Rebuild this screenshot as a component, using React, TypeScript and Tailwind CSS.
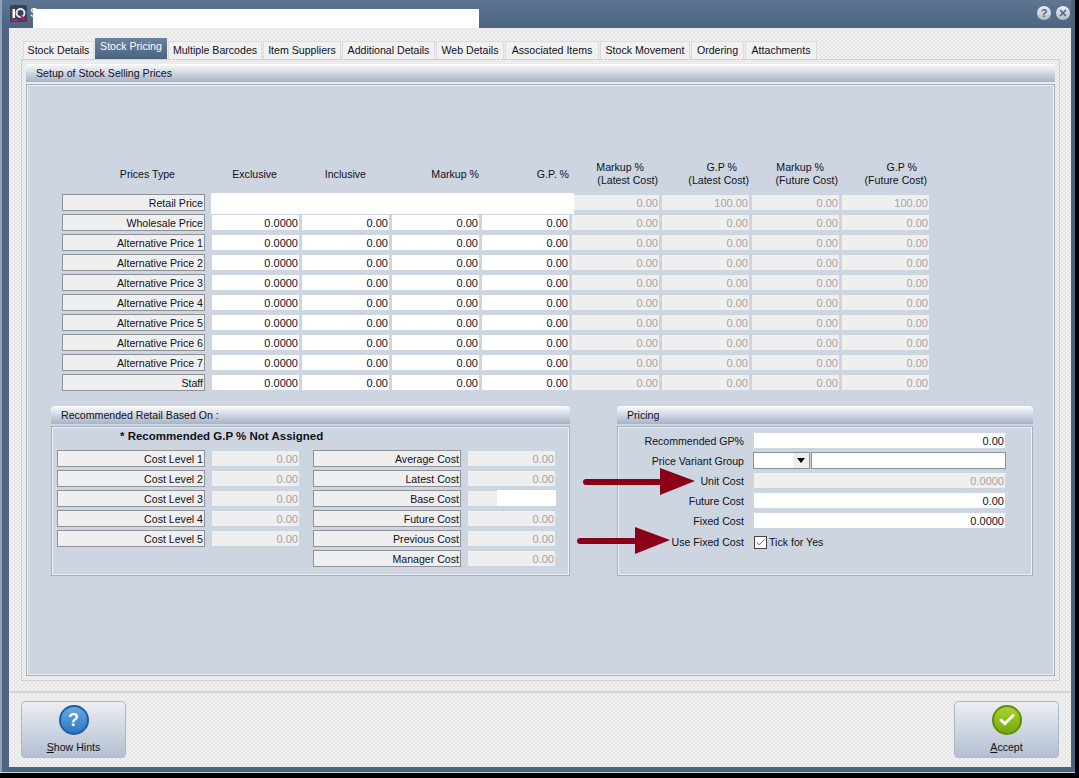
import type { ReactNode } from 'react';
import { Check, X } from 'lucide-react';

const tabs = [
  ['Stock Details', 'w-[71px]'],
  ['Stock Pricing', 'w-[72px]'],
  ['Multiple Barcodes', 'w-[94px]'],
  ['Item Suppliers', 'w-[78px]'],
  ['Additional Details', 'w-[93px]'],
  ['Web Details', 'w-[68px]'],
  ['Associated Items', 'w-[94px]'],
  ['Stock Movement', 'w-[90px]'],
  ['Ordering', 'w-[53px]'],
  ['Attachments', 'w-[72px]'],
];
const priceRows = ['Wholesale Price', 'Alternative Price 1', 'Alternative Price 2', 'Alternative Price 3', 'Alternative Price 4', 'Alternative Price 5', 'Alternative Price 6', 'Alternative Price 7', 'Staff'];
const costLevels = ['Cost Level 1', 'Cost Level 2', 'Cost Level 3', 'Cost Level 4', 'Cost Level 5'];
const costs = ['Average Cost', 'Latest Cost', 'Base Cost', 'Future Cost', 'Previous Cost', 'Manager Cost'];

function Label({ text, wide }: { text: string; wide?: boolean }) {
  return (
    <div className={(wide ? 'w-[148px]' : 'w-[143px]') + ' h-[17px] shrink-0 bg-[#efefef] border border-[#8e9296] text-right pr-[1px] leading-[16px]'}>
      {text}
    </div>
  );
}

function Field({ value, disabled, className = 'w-[87px]' }: { value: string; disabled?: boolean; className?: string }) {
  return (
    <div className={className + ' h-[15px] shrink-0 text-right text-[11px] pr-[1px] leading-[17px] ' + (disabled ? 'bg-[#efefef] text-[#a3a3a3]' : 'bg-white text-[#10101c]')}>
      {value}
    </div>
  );
}

function Panel({ title, className, boxClass, children }: { title: string; className: string; boxClass: string; children: ReactNode }) {
  return (
    <div className={className}>
      <div className="h-[18px] rounded-t-[4px] bg-gradient-to-b from-[#f6f7f9] to-[#a8b3c6] border-t border-white pl-[10px] leading-[17px]">{title}</div>
      <div className={'mt-[2px] border border-[#a3b0c1] shadow-[inset_0_0_0_1px_#eef1f5] bg-[#cdd6e0] ' + boxClass}>{children}</div>
    </div>
  );
}

function Arrow({ className, width, shaft }: { className: string; width: number; shaft: number }) {
  return (
    <svg className={'absolute ' + className} width={width} height={28} viewBox={`0 0 ${width} 28`}>
      <rect x="0" y="11" width={shaft + 2} height="6" rx="3" fill="#8a0018" />
      <path d={`M${shaft} 0 L${width} 13 L${shaft} 27 Z`} fill="#8a0018" />
    </svg>
  );
}

function ActionButton({ children, hot, rest }: { children: ReactNode; hot: string; rest: string }) {
  return (
    <div className="w-[105px] h-[57px] rounded-[4px] border border-[#a9b7cc] bg-gradient-to-b from-[#eceef2] to-[#b3bfd0] flex flex-col items-center pt-[3px]">
      {children}
      <div className="mt-[5px] leading-[14px] text-[#10101c]"><span className="underline">{hot}</span>{rest}</div>
    </div>
  );
}

export default function App() {
  return (
    <div className="relative w-[1079px] h-[778px] bg-black overflow-hidden font-['Liberation_Sans',sans-serif] text-[10.6px] text-[#10101c]">
      <div className="w-[1075px] h-[773px] bg-[#4d6480] border-b border-[#c9d2dd] flex flex-col pl-[9px] pr-[4px] pb-[5px] shadow-[inset_2px_0_0_#8fa2b8]">
        {/* Title bar */}
        <div className="h-[28px] shrink-0 flex items-start bg-gradient-to-b from-[#5f7693] to-[#4d6480] -ml-[7px] pl-[7px]">
          <svg className="mt-[5px] ml-[1px]" width="17" height="17" viewBox="0 0 17 17">
            <rect width="17" height="17" rx="2" fill="#39405a" />
            <rect x="2.5" y="4" width="2.5" height="9" fill="#fff" />
            <circle cx="10.5" cy="8" r="4" fill="none" stroke="#e8e8f0" strokeWidth="2" />
            <path d="M11 11 L15 15" stroke="#c2186b" strokeWidth="2.4" />
            <rect x="2" y="14" width="6" height="2" fill="#c2186b" />
          </svg>
          <span className="ml-[3px] mt-[4px] w-[3px] text-white text-[12px]">S</span>
          <div className="relative mt-[9px] w-[446px] h-[19px] bg-white" />
          <div className="ml-auto flex gap-[5px] mt-[6px] mr-[1px]">
            <div className="w-[14px] h-[14px] rounded-full bg-gradient-to-b from-[#f0f0f0] to-[#b5bcc6] text-[#4d6480] font-bold text-[11px] leading-[14px] text-center">?</div>
            <div className="w-[14px] h-[14px] rounded-full bg-gradient-to-b from-[#f0f0f0] to-[#b5bcc6] flex items-center justify-center">
              <X size={10} strokeWidth={4} className="text-[#4d6480]" />
            </div>
          </div>
        </div>

        {/* Body */}
        <div className="flex-1 flex flex-col bg-[#ececec] bg-[repeating-conic-gradient(#f1f1f1_0_25%,#e6e6e6_0_50%)] bg-[length:4px_4px]">
          <div className="flex ml-[14px] mt-[13px] gap-[1px] h-[18px] items-end">
            {tabs.map(([t, w]) => (
              <div
                key={t}
                className={w + ' text-center ' + (t === 'Stock Pricing'
                  ? 'h-[21px] bg-gradient-to-b from-[#6b829e] to-[#4d6480] text-white leading-[17px]'
                  : 'h-[18px] bg-[#f1f1f1] border-x border-t border-[#dcdcdc] leading-[16px]')}
              >
                {t}
              </div>
            ))}
          </div>
          <div className="ml-[12px] mr-[11px] h-[622px] border border-[#cfcfcf] p-[4px] flex flex-col">
            <Panel title="Setup of Stock Selling Prices" className="flex-1 flex flex-col" boxClass="flex-1 pl-[24px] pt-[76px]">
              <div className="ml-[11px]">
                <div className="flex items-center h-[26px] mb-[7px]">
                  <div className="w-[143px] text-right pr-[30px] pt-[2px]">Prices Type</div>
                  <div className="w-[7px]" />
                  <div className="flex items-center gap-[3px] text-right">
                    <div className="w-[87px] pr-[22px] pt-[2px]">Exclusive</div>
                    <div className="w-[87px] pr-[23px] pt-[2px]">Inclusive</div>
                    <div className="w-[87px] pt-[2px]">Markup %</div>
                    <div className="w-[87px] pt-[2px]">G.P. %</div>
                    <div className="w-[87px] leading-[13px]"><div className="pr-[15px]">Markup %</div><div className="pr-[1px]">(Latest Cost)</div></div>
                    <div className="w-[87px] leading-[13px]"><div className="pr-[12px]">G.P %</div><div>(Latest Cost)</div></div>
                    <div className="w-[87px] leading-[13px]"><div className="pr-[15px]">Markup %</div><div className="pr-[1px]">(Future Cost)</div></div>
                    <div className="w-[87px] leading-[13px]"><div className="pr-[12px]">G.P %</div><div className="pr-[2px]">(Future Cost)</div></div>
                  </div>
                </div>
                <div className="flex flex-col gap-[3px]">
                  <div className="relative flex items-center gap-[7px]">
                    <Label text="Retail Price" />
                    <div className="flex gap-[3px]">
                      <div className="w-[357px] shrink-0" />
                      <Field value="0.00" disabled />
                      <Field value="100.00" disabled />
                      <Field value="0.00" disabled />
                      <Field value="100.00" disabled />
                    </div>
                    <div className="absolute left-[149px] -top-[1px] w-[363px] h-[21px] bg-white" />
                  </div>
                  {priceRows.map((r) => (
                    <div key={r} className="flex items-center gap-[7px]">
                      <Label text={r} />
                      <div className="flex gap-[3px]">
                        <Field value="0.0000" />
                        <Field value="0.00" />
                        <Field value="0.00" />
                        <Field value="0.00" />
                        <Field value="0.00" disabled />
                        <Field value="0.00" disabled />
                        <Field value="0.00" disabled />
                        <Field value="0.00" disabled />
                      </div>
                    </div>
                  ))}
                </div>
              </div>

              <div className="flex gap-[47px] mt-[15px]">
                <Panel title="Recommended Retail Based On :" className="w-[519px]" boxClass="h-[150px] px-[5px]">
                  <div className="h-[23px] pl-[63px] pt-[2px] font-bold text-[11.5px] leading-[14px]">* Recommended G.P % Not Assigned</div>
                  <div className="flex gap-[14px]">
                    <div className="flex flex-col gap-[3px]">
                      {costLevels.map((c) => (
                        <div key={c} className="flex items-center gap-[7px]">
                          <Label text={c} wide />
                          <Field value="0.00" disabled />
                        </div>
                      ))}
                    </div>
                    <div className="flex flex-col gap-[3px]">
                      {costs.map((c) => (
                        <div key={c} className="relative flex items-center gap-[7px]">
                          <Label text={c} wide />
                          <Field value={c === 'Base Cost' ? '' : '0.00'} disabled />
                          {c === 'Base Cost' && <div className="absolute left-[184px] top-0 w-[59px] h-[16px] bg-white" />}
                        </div>
                      ))}
                    </div>
                  </div>
                </Panel>

                <Panel title="Pricing" className="w-[416px]" boxClass="h-[150px] pt-[5px]">
                  <div className="flex flex-col gap-[3px]">
                    {[['Recommended GP%', '0.00', false], ['Price Variant Group', '', false], ['Unit Cost', '0.0000', true], ['Future Cost', '0.00', false], ['Fixed Cost', '0.0000', false]].map(([l, v, d]) => (
                      <div key={l as string} className="flex items-center h-[17px]">
                        <div className="w-[126px] text-right shrink-0 leading-[18px]">{l as string}</div>
                        {l === 'Price Variant Group' ? (
                          <div className="flex ml-[9px] h-[17px]">
                            <div className="w-[57px] border border-[#8e9296] bg-white flex justify-end">
                              <div className="w-[16px] bg-[#efefef] flex items-center justify-center">
                                <div className="w-0 h-0 border-x-[4px] border-x-transparent border-t-[5px] border-t-black" />
                              </div>
                            </div>
                            <div className="ml-[1px] w-[195px] border border-[#8e9296] bg-white" />
                          </div>
                        ) : (
                          <Field value={v as string} disabled={d as boolean} className="ml-[10px] w-[251px]" />
                        )}
                      </div>
                    ))}
                    <div className="flex items-center h-[17px] mt-[2px]">
                      <div className="w-[126px] text-right shrink-0 leading-[15px]">Use Fixed Cost</div>
                      <div className="ml-[10px] w-[13px] h-[13px] border border-[#444] bg-white flex items-center justify-center">
                        <Check size={11} strokeWidth={2} className="text-[#555]" />
                      </div>
                      <div className="ml-[2px]">Tick for Yes</div>
                    </div>
                  </div>
                </Panel>
              </div>
            </Panel>
          </div>

          <div className="mt-[10px] border-t-2 border-[#d4d4d4] flex-1 flex justify-between items-start pt-[8px] pl-[12px] pr-[12px]">
            <ActionButton hot="S" rest="how Hints">
              <div className="w-[30px] h-[30px] rounded-full border-2 border-[#1c5f9f] bg-gradient-to-b from-[#68a7e2] to-[#2b78c4] text-white font-bold text-[18px] leading-[26px] text-center">?</div>
            </ActionButton>
            <ActionButton hot="A" rest="ccept">
              <div className="w-[30px] h-[30px] rounded-full border-2 border-[#5f8c0a] bg-gradient-to-b from-[#a9d42c] to-[#73a90e] flex items-center justify-center">
                <Check size={18} strokeWidth={4} className="text-white" />
              </div>
            </ActionButton>
          </div>
        </div>
      </div>

      {/* Annotation arrows */}
      <Arrow className="left-[583px] top-[468px]" width={112} shaft={77} />
      <Arrow className="left-[577px] top-[527px]" width={93} shaft={58} />
    </div>
  );
}
